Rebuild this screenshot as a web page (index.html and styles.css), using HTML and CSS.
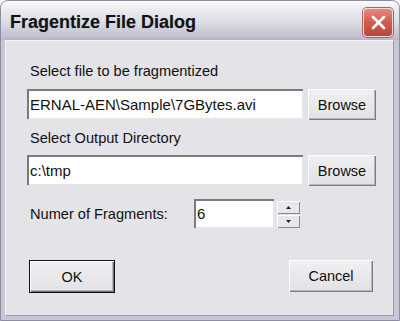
FILE: index.html
```html
<!DOCTYPE html>
<html lang="en">
<head>
  <meta charset="UTF-8" />
  <meta name="viewport" content="width=device-width, initial-scale=1.0" />
  <title>Fragentize File Dialog</title>
  <link rel="stylesheet" href="styles.css">
</head>

<body>
  <main class="window">
    <header class="titlebar">
      <span class="title">Fragentize File Dialog</span>
      <button class="close-button" aria-label="Close">
        <svg width="15" height="15" viewBox="0 0 15 15">
          <path d="M2 2 L13 13 M13 2 L2 13" stroke="#fff" stroke-width="2.6" stroke-linecap="round" />
        </svg>
      </button>
    </header>

    <section class="client">
      <label class="caption" for="sourceFile">Select file to be fragmentized</label>
      <div class="row">
        <input class="field" id="sourceFile" type="text" value="ERNAL-AEN\Sample\7GBytes.avi" />
        <button class="btn">Browse</button>
      </div>

      <label class="caption second" for="outputDir">Select Output Directory</label>
      <div class="row second">
        <input class="field" id="outputDir" type="text" value="c:\tmp" />
        <button class="btn">Browse</button>
      </div>

      <div class="count-row">
        <label class="count-label" for="fragments">Numer of Fragments:</label>
        <input class="field spin-field" id="fragments" type="text" value="6" />
        <div class="spin-buttons">
          <button class="spin-btn" aria-label="Up">
            <svg width="5" height="3" viewBox="0 0 5 3"><path d="M2.5 0 L5 3 L0 3 Z" fill="#222" /></svg>
          </button>
          <button class="spin-btn" aria-label="Down">
            <svg width="5" height="3" viewBox="0 0 5 3"><path d="M0 0 L5 0 L2.5 3 Z" fill="#222" /></svg>
          </button>
        </div>
      </div>

      <div class="actions">
        <button class="btn action default">OK</button>
        <button class="btn action">Cancel</button>
      </div>
    </section>
  </main>
</body>
</html>
```

FILE: styles.css
```css
* {
  box-sizing: border-box;
}

body {
  margin: 0;
  background: #f2f2f4;
  font-family: "Liberation Sans", Arial, sans-serif;
  color: #111;
}

.window {
  width: 400px;
  height: 321px;
  display: flex;
  flex-direction: column;
  padding: 0 5px 4px 4px;
  border: 1px solid #8e8ea2;
  border-radius: 8px 8px 0 0;
  background: #c6c6d4;
}

.titlebar {
  height: 39px;
  margin: 0 -5px 0 -4px;
  padding: 0 6px 0 9px;
  display: flex;
  align-items: center;
  justify-content: space-between;
  border-radius: 7px 7px 0 0;
  background: linear-gradient(#fbfbfd 0%, #ececf1 20%, #dcdce5 55%, #c2c2d0 90%, #b4b4c4 100%);
}

.title {
  margin-top: 3px;
  font-size: 18px;
  font-weight: bold;
  color: #111;
  text-shadow: 0 0 1px rgba(0, 0, 0, 0.25);
}

.close-button {
  width: 30px;
  height: 29px;
  margin-top: 3px;
  padding: 0;
  display: flex;
  align-items: center;
  justify-content: center;
  border: 1px solid #f3d8d4;
  border-radius: 4px;
  background: linear-gradient(#e48a80, #cf5a50 50%, #b8463c);
  box-shadow: 0 0 0 1px #b06060;
}

.client {
  flex: 1;
  padding: 22px 0 0 21px;
  background: #e3e3e8;
  border-top: 1px solid #f6f6f8;
  border-left: 1px solid #f6f6f8;
  border-right: 1px solid #9a9aac;
  border-bottom: 1px solid #9a9aac;
}

.caption {
  display: block;
  height: 17px;
  margin-left: 3px;
  font-size: 14.6px;
  line-height: 17px;
}

.caption.second {
  margin-top: 10px;
}

.row {
  display: flex;
  align-items: flex-start;
  gap: 5px;
  margin-top: 9px;
}

.row.second {
  margin-top: 8px;
}

.field {
  width: 276px;
  height: 30px;
  padding: 0 0 0 3px;
  font-family: "Liberation Sans", Arial, sans-serif;
  font-size: 15px;
  color: #111;
  background: #fff;
  border: none;
  border-radius: 0;
  box-shadow:
    inset 2px 2px 0 #7a7a7a,
    inset -1px -1px 0 #e8e8e8;
  outline: none;
}

.btn {
  width: 68px;
  height: 31px;
  padding: 0;
  font-family: "Liberation Sans", Arial, sans-serif;
  font-size: 14.5px;
  color: #111;
  background: linear-gradient(#f0f0f2, #e2e2e6);
  border: none;
  border-radius: 0;
  box-shadow:
    inset 1px 1px 0 #ffffff,
    inset -1px -1px 0 #7c7c7c,
    inset -2px -2px 0 #b8b8bc;
  cursor: pointer;
}

.count-row {
  display: flex;
  align-items: center;
  margin-top: 13px;
  height: 29px;
}

.count-label {
  width: 164px;
  margin-left: 3px;
  font-size: 14.6px;
}

.spin-field {
  width: 80px;
  height: 29px;
}

.spin-buttons {
  display: flex;
  flex-direction: column;
  gap: 1px;
  margin: 2px 0 0 3px;
}

.spin-btn {
  width: 23px;
  height: 13px;
  padding: 0;
  display: flex;
  align-items: center;
  justify-content: center;
  background: #e8e8ec;
  border: none;
  box-shadow:
    inset 1px 1px 0 #ffffff,
    inset -1px -1px 0 #8a8a8a;
}

.actions {
  width: 344px;
  margin: 32px 0 0 2px;
  display: flex;
  justify-content: space-between;
}

.action {
  width: 84px;
  height: 32px;
}

.action.default {
  width: 86px;
  height: 33px;
  box-shadow:
    inset 0 0 0 1px #111,
    inset 2px 2px 0 #ffffff,
    inset -2px -2px 0 #6e6e6e,
    inset -3px -3px 0 #b8b8bc;
}
```
